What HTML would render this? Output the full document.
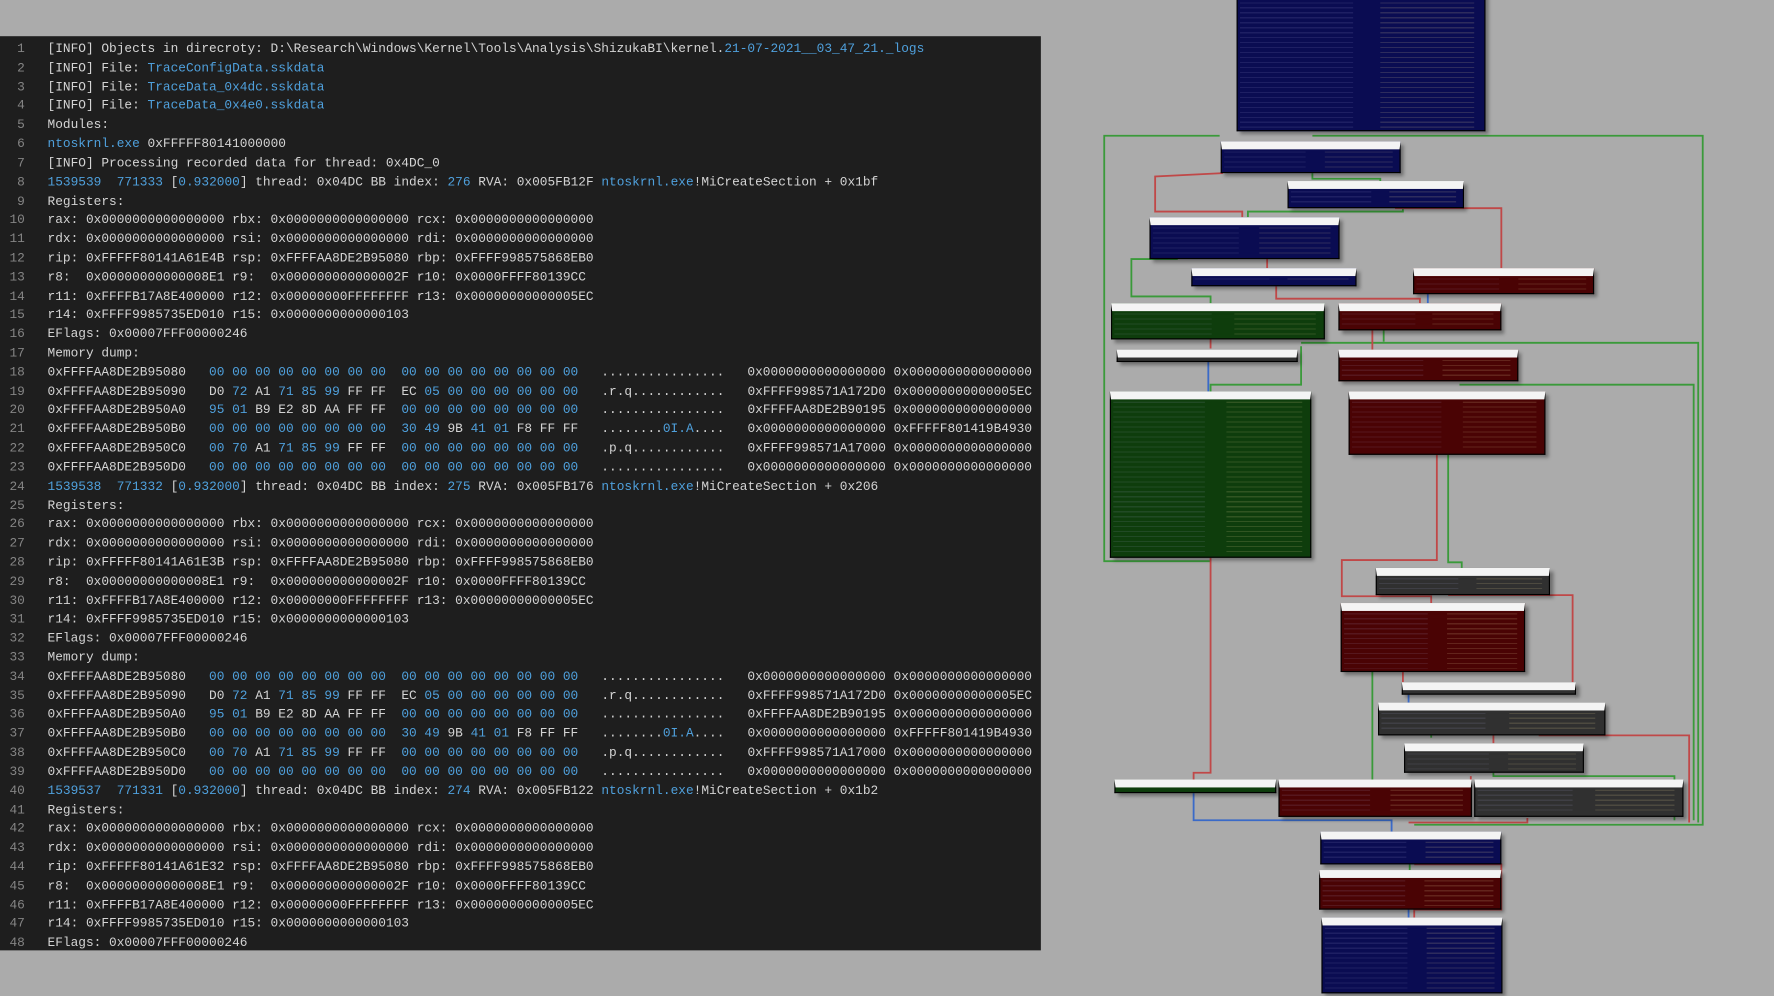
<!DOCTYPE html>
<html><head><meta charset="utf-8"><style>
html,body{margin:0;padding:0;width:1774px;height:996px;overflow:hidden;background:#ababab}
#w{position:absolute;left:0;top:0;width:1568px;height:880px;transform:scale(1.13138);transform-origin:0 0;background:#ababab}
#panel{position:absolute;left:0;top:32px;width:920px;height:808px;background:#1e1e1e}
.ln{position:absolute;left:0;top:4px;width:22px;text-align:right;font:11.33px/16.82px "Liberation Mono",monospace;color:#858585;white-space:pre;margin:0}
.tx{position:absolute;left:42px;top:4px;font:11.33px/16.82px "Liberation Mono",monospace;color:#d4d4d4;white-space:pre;margin:0}
b{font-weight:normal;color:#4fa0dc}
.bx{position:absolute;border:1px solid #000;box-shadow:3px 3px 3px rgba(0,0,0,.35);border-top:7px solid #f4f4f4}
.bl{background:#0a0c52}.rd{background:#4a0304}.gr{background:#0e3d0c}.gy{background:#303030}
.bx:before{content:"";position:absolute;left:2px;top:2px;width:46%;bottom:2px;background:repeating-linear-gradient(to bottom,rgba(170,170,220,.12) 0 1px,transparent 1px 4.4px)}
.bx:after{content:"";position:absolute;left:58%;top:2px;width:38%;bottom:2px;background:repeating-linear-gradient(to bottom,rgba(230,210,150,.16) 0 1px,transparent 1px 4.4px)}
svg{position:absolute;left:0;top:0}
</style></head><body><div id="w">
<div id="panel">
<pre class="ln">1
2
3
4
5
6
7
8
9
10
11
12
13
14
15
16
17
18
19
20
21
22
23
24
25
26
27
28
29
30
31
32
33
34
35
36
37
38
39
40
41
42
43
44
45
46
47
48</pre>
<pre class="tx">[INFO] Objects in direcroty: D:\Research\Windows\Kernel\Tools\Analysis\ShizukaBI\kernel.<b>21-07-2021__03_47_21._logs</b>
[INFO] File: <b>TraceConfigData.sskdata</b>
[INFO] File: <b>TraceData_0x4dc.sskdata</b>
[INFO] File: <b>TraceData_0x4e0.sskdata</b>
Modules:
<b>ntoskrnl.exe</b> 0xFFFFF80141000000
[INFO] Processing recorded data for thread: 0x4DC_0
<b>1539539  771333</b> [<b>0.932000</b>] thread: 0x04DC BB index: <b>276</b> RVA: 0x005FB12F <b>ntoskrnl.exe</b>!MiCreateSection + 0x1bf
Registers:
rax: 0x0000000000000000 rbx: 0x0000000000000000 rcx: 0x0000000000000000
rdx: 0x0000000000000000 rsi: 0x0000000000000000 rdi: 0x0000000000000000
rip: 0xFFFFF80141A61E4B rsp: 0xFFFFAA8DE2B95080 rbp: 0xFFFF998575868EB0
r8:  0x00000000000008E1 r9:  0x000000000000002F r10: 0x0000FFFF80139CC
r11: 0xFFFFB17A8E400000 r12: 0x00000000FFFFFFFF r13: 0x00000000000005EC
r14: 0xFFFF9985735ED010 r15: 0x0000000000000103
EFlags: 0x00007FFF00000246
Memory dump:
0xFFFFAA8DE2B95080   <b>00 00 00 00 00 00 00 00  00 00 00 00 00 00 00 00</b>   ................   0x0000000000000000 0x0000000000000000
0xFFFFAA8DE2B95090   D0 <b>72</b> A1 <b>71 85 99</b> FF FF  EC <b>05 00 00 00 00 00 00</b>   .r.q............   0xFFFF998571A172D0 0x00000000000005EC
0xFFFFAA8DE2B950A0   <b>95 01</b> B9 E2 8D AA FF FF  <b>00 00 00 00 00 00 00 00</b>   ................   0xFFFFAA8DE2B90195 0x0000000000000000
0xFFFFAA8DE2B950B0   <b>00 00 00 00 00 00 00 00  30 49</b> 9B <b>41 01</b> F8 FF FF   ........<b>0I.A</b>....   0x0000000000000000 0xFFFFF801419B4930
0xFFFFAA8DE2B950C0   <b>00 70</b> A1 <b>71 85 99</b> FF FF  <b>00 00 00 00 00 00 00 00</b>   .p.q............   0xFFFF998571A17000 0x0000000000000000
0xFFFFAA8DE2B950D0   <b>00 00 00 00 00 00 00 00  00 00 00 00 00 00 00 00</b>   ................   0x0000000000000000 0x0000000000000000
<b>1539538  771332</b> [<b>0.932000</b>] thread: 0x04DC BB index: <b>275</b> RVA: 0x005FB176 <b>ntoskrnl.exe</b>!MiCreateSection + 0x206
Registers:
rax: 0x0000000000000000 rbx: 0x0000000000000000 rcx: 0x0000000000000000
rdx: 0x0000000000000000 rsi: 0x0000000000000000 rdi: 0x0000000000000000
rip: 0xFFFFF80141A61E3B rsp: 0xFFFFAA8DE2B95080 rbp: 0xFFFF998575868EB0
r8:  0x00000000000008E1 r9:  0x000000000000002F r10: 0x0000FFFF80139CC
r11: 0xFFFFB17A8E400000 r12: 0x00000000FFFFFFFF r13: 0x00000000000005EC
r14: 0xFFFF9985735ED010 r15: 0x0000000000000103
EFlags: 0x00007FFF00000246
Memory dump:
0xFFFFAA8DE2B95080   <b>00 00 00 00 00 00 00 00  00 00 00 00 00 00 00 00</b>   ................   0x0000000000000000 0x0000000000000000
0xFFFFAA8DE2B95090   D0 <b>72</b> A1 <b>71 85 99</b> FF FF  EC <b>05 00 00 00 00 00 00</b>   .r.q............   0xFFFF998571A172D0 0x00000000000005EC
0xFFFFAA8DE2B950A0   <b>95 01</b> B9 E2 8D AA FF FF  <b>00 00 00 00 00 00 00 00</b>   ................   0xFFFFAA8DE2B90195 0x0000000000000000
0xFFFFAA8DE2B950B0   <b>00 00 00 00 00 00 00 00  30 49</b> 9B <b>41 01</b> F8 FF FF   ........<b>0I.A</b>....   0x0000000000000000 0xFFFFF801419B4930
0xFFFFAA8DE2B950C0   <b>00 70</b> A1 <b>71 85 99</b> FF FF  <b>00 00 00 00 00 00 00 00</b>   .p.q............   0xFFFF998571A17000 0x0000000000000000
0xFFFFAA8DE2B950D0   <b>00 00 00 00 00 00 00 00  00 00 00 00 00 00 00 00</b>   ................   0x0000000000000000 0x0000000000000000
<b>1539537  771331</b> [<b>0.932000</b>] thread: 0x04DC BB index: <b>274</b> RVA: 0x005FB122 <b>ntoskrnl.exe</b>!MiCreateSection + 0x1b2
Registers:
rax: 0x0000000000000000 rbx: 0x0000000000000000 rcx: 0x0000000000000000
rdx: 0x0000000000000000 rsi: 0x0000000000000000 rdi: 0x0000000000000000
rip: 0xFFFFF80141A61E32 rsp: 0xFFFFAA8DE2B95080 rbp: 0xFFFF998575868EB0
r8:  0x00000000000008E1 r9:  0x000000000000002F r10: 0x0000FFFF80139CC
r11: 0xFFFFB17A8E400000 r12: 0x00000000FFFFFFFF r13: 0x00000000000005EC
r14: 0xFFFF9985735ED010 r15: 0x0000000000000103
EFlags: 0x00007FFF00000246</pre>
</div>

<svg width="1568" height="880" fill="none" stroke-width="1.6">
<g stroke="#3a9a3a">
<polyline points="1078,120 976,120 976,496 1070,496"/>
<polyline points="1160,120 1505,120 1505,729 1250,729"/>
<polyline points="1150,303 1501,303 1501,727"/>
<polyline points="1290,340 1497,340 1497,725"/>
<polyline points="1280,402 1280,497 1292,497 1292,502"/>
<polyline points="1213,594 1213,689"/>
<polyline points="1160,153 1160,158 1220,158 1220,160"/>
<polyline points="1240,184 1240,187 1103,187 1103,192"/>
<polyline points="1041,229 1000,229 1000,262 1070,262 1070,268"/>
<polyline points="1223,292 1223,302"/>
<polyline points="1150,306 1150,340 1070,340 1070,346"/>
<polyline points="1265,630 1265,652"/>
<polyline points="1320,683 1320,686 1480,686 1480,725"/>
<polyline points="1246,764 1246,769"/>
</g>
<g stroke="#c04848">
<polyline points="1081,153 1021,156 1021,187 1098,187 1098,192"/>
<polyline points="1233,184 1327,184 1327,237"/>
<polyline points="1120,229 1120,237"/>
<polyline points="1128,253 1128,264 1255,264 1255,268"/>
<polyline points="1213,292 1213,309"/>
<polyline points="1070,300 1070,308"/>
<polyline points="1270,402 1270,495 1186,495 1186,527 1265,527 1265,533"/>
<polyline points="1070,493 1070,683 1055,683 1055,689"/>
<polyline points="1240,594 1240,603"/>
<polyline points="1280,526 1390,526 1390,603"/>
<polyline points="1320,650 1320,657"/>
<polyline points="1360,650 1493,650 1493,727"/>
<polyline points="1300,686 1300,689"/>
<polyline points="1250,764 1327,764 1327,804 1250,804 1250,811"/>
<polyline points="1350,723 1350,727 1245,727"/>
</g>
<g stroke="#3a6ac8">
<polyline points="1055,701 1055,725 1230,725 1230,735"/>
<polyline points="1068,320 1068,346"/>
<polyline points="1262,255 1262,268"/>
<polyline points="1245,614 1245,621"/>
<polyline points="1245,804 1245,811"/>
</g>
</svg>

<div class="bx bl" style="left:1093px;top:-7px;width:218px;height:115px"></div>
<div class="bx bl" style="left:1079px;top:125px;width:157px;height:20px"></div>
<div class="bx bl" style="left:1138px;top:160px;width:154px;height:16px"></div>
<div class="bx bl" style="left:1016px;top:192px;width:166px;height:29px"></div>
<div class="bx bl" style="left:1053px;top:237px;width:144px;height:8px"></div>
<div class="bx rd" style="left:1249px;top:237px;width:158px;height:15px"></div>
<div class="bx gr" style="left:982px;top:268px;width:187px;height:24px"></div>
<div class="bx rd" style="left:1183px;top:268px;width:142px;height:16px"></div>
<div class="bx gy" style="left:987px;top:309px;width:158px;height:3px"></div>
<div class="bx rd" style="left:1183px;top:309px;width:157px;height:20px"></div>
<div class="bx gr" style="left:981px;top:346px;width:176px;height:139px"></div>
<div class="bx rd" style="left:1192px;top:346px;width:172px;height:48px"></div>
<div class="bx gy" style="left:1216px;top:502px;width:152px;height:16px"></div>
<div class="bx rd" style="left:1185px;top:533px;width:161px;height:53px"></div>
<div class="bx gy" style="left:1239px;top:603px;width:152px;height:3px"></div>
<div class="bx gy" style="left:1218px;top:621px;width:199px;height:21px"></div>
<div class="bx gy" style="left:1241px;top:657px;width:157px;height:18px"></div>
<div class="bx gr" style="left:985px;top:689px;width:141px;height:4px"></div>
<div class="bx rd" style="left:1130px;top:689px;width:169px;height:25px"></div>
<div class="bx gy" style="left:1303px;top:689px;width:183px;height:25px"></div>
<div class="bx bl" style="left:1167px;top:735px;width:158px;height:21px"></div>
<div class="bx rd" style="left:1166px;top:769px;width:159px;height:27px"></div>
<div class="bx bl" style="left:1168px;top:811px;width:158px;height:59px"></div>
</div></body></html>
